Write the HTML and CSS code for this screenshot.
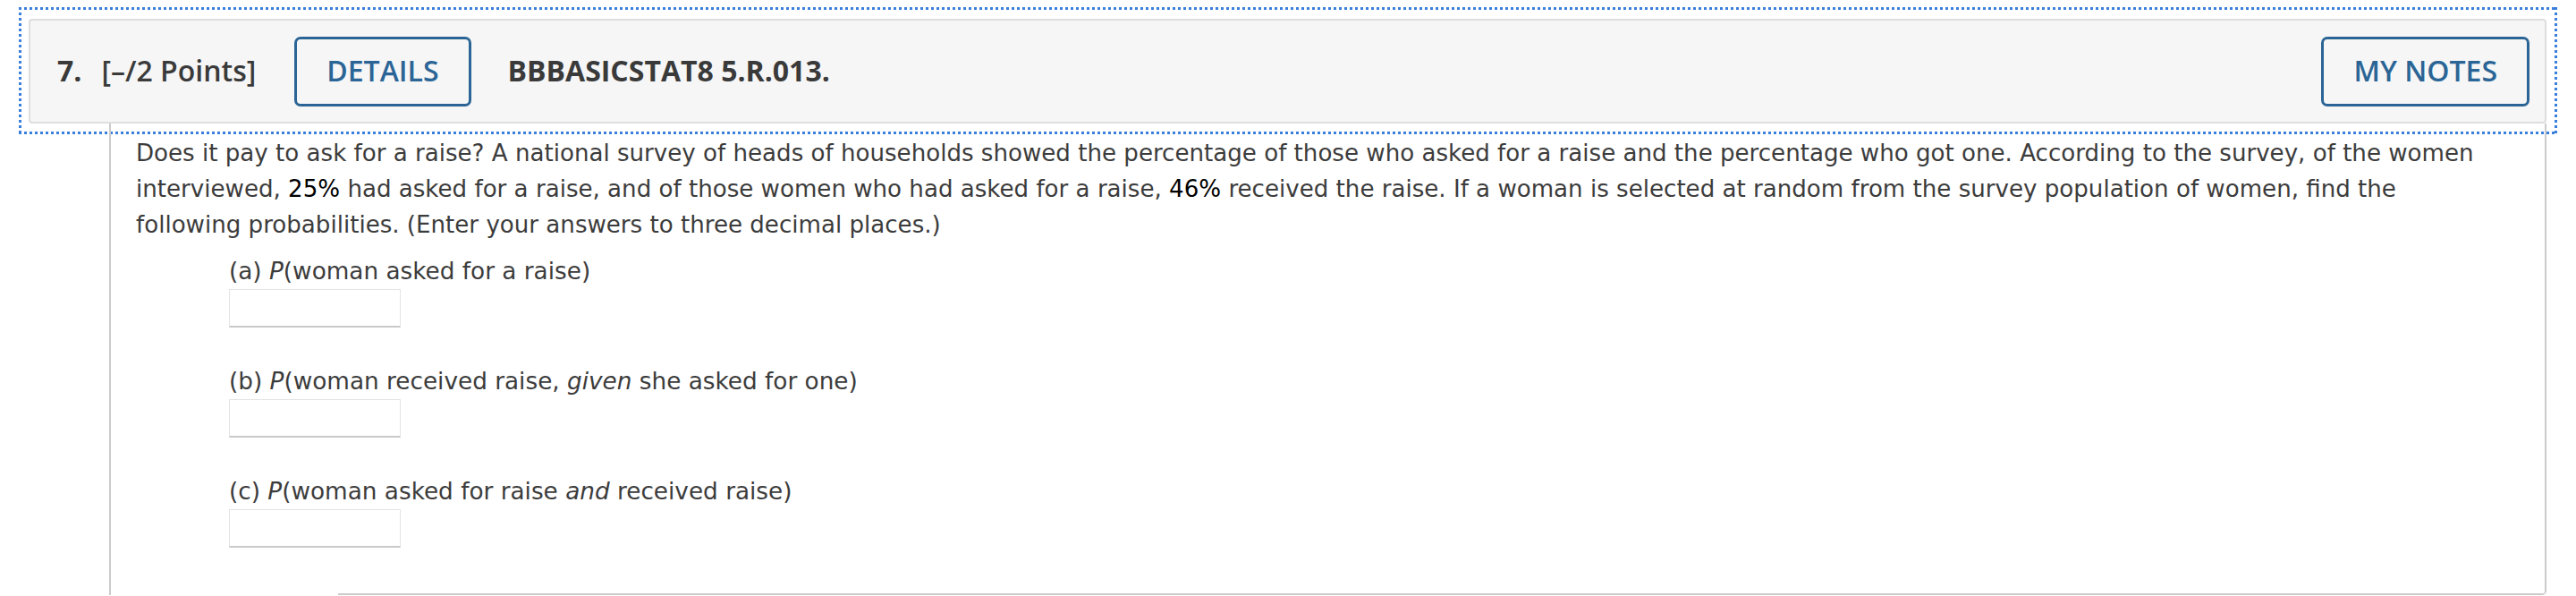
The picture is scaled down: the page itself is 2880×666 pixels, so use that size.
FILE: index.html
```html
<!DOCTYPE html>
<html lang="en">
<head>
<meta charset="utf-8">
<title>Question 7</title>
<link rel="stylesheet" href="styles.css">
</head>
<body>
<div class="page">
  <div class="question">
    <div class="focus-ring">
      <div class="q-header">
        <span class="q-num">7.</span>
        <span class="q-points">[–/2 Points]</span>
        <button class="btn">DETAILS</button>
        <span class="q-code">BBBASICSTAT8 5.R.013.</span>
        <button class="btn btn-notes">MY NOTES</button>
      </div>
    </div>
    <div class="q-body">
      <p class="q-text">Does it pay to ask for a raise? A national survey of heads of households showed the percentage of those who asked for a raise and the percentage who got one. According to the survey, of the women interviewed, <span class="num">25%</span> had asked for a raise, and of those women who had asked for a raise, <span class="num">46%</span> received the raise. If a woman is selected at random from the survey population of women, find the following probabilities. (Enter your answers to three decimal places.)</p>
      <div class="parts">
        <div class="part">
          <div class="part-label">(a) <i>P</i>(woman asked for a raise)</div>
          <input class="answer" type="text">
        </div>
        <div class="part">
          <div class="part-label">(b) <i>P</i>(woman received raise, <i>given</i> she asked for one)</div>
          <input class="answer" type="text">
        </div>
        <div class="part">
          <div class="part-label">(c) <i>P</i>(woman asked for raise <i>and</i> received raise)</div>
          <input class="answer" type="text">
        </div>
      </div>
    </div>
  </div>
</div>
</body>
</html>
```

FILE: styles.css
```css
html, body {
  margin: 0;
  padding: 0;
  background: #ffffff;
}

.page {
  padding: 8px 21px 0 21px;
}

.question {
  display: flex;
  flex-direction: column;
}

.focus-ring {
  position: relative;
  z-index: 0;
  padding: 13px 12px 12px 11px;
  background:
    repeating-linear-gradient(to right, #3a7fdc 0 3px, transparent 3px 6px) left top / 100% 3px no-repeat,
    repeating-linear-gradient(to right, #3a7fdc 0 3px, transparent 3px 6px) left bottom / 100% 3px no-repeat,
    repeating-linear-gradient(to bottom, #3a7fdc 0 3px, transparent 3px 6px) left top / 3px 100% no-repeat,
    repeating-linear-gradient(to bottom, #3a7fdc 0 3px, transparent 3px 6px) right top / 3px 100% no-repeat;
}

.q-header {
  display: flex;
  align-items: center;
  height: 113px;
  padding: 0 17px 0 30px;
  background: #f6f6f6;
  border: 2px solid #dedede;
  border-radius: 4px;
  font-family: "Open Sans", "Liberation Sans", sans-serif;
  font-size: 32px;
  line-height: 1.2;
  color: #3a3a3a;
}

.q-num {
  font-weight: 700;
  margin-right: 22px;
}

.q-points {
  font-weight: 600;
  margin-right: 43px;
}

.q-code {
  font-weight: 700;
  margin-left: 41px;
  flex: 1;
}

.btn {
  display: flex;
  align-items: center;
  justify-content: center;
  height: 78px;
  padding: 0 33px;
  background: transparent;
  border: 3px solid #2b6596;
  border-radius: 7px;
  font-family: "Open Sans", "Liberation Sans", sans-serif;
  font-size: 32px;
  line-height: 1.2;
  font-weight: 600;
  color: #2b6596;
}

.q-body {
  position: relative;
  z-index: 1;
  margin: -12px 12px 0 101px;
  padding: 13px 44px 13px 28px;
  border-left: 2px solid #cbcbcb;
  border-right: 2px solid #cbcbcb;
  border-bottom-right-radius: 5px;
  background: linear-gradient(#cbcbcb, #cbcbcb) right bottom / calc(100% - 254px) 2px no-repeat;
  font-family: "DejaVu Sans", Verdana, sans-serif;
  font-size: 26.1px;
  line-height: 40px;
  color: #3c3c3c;
}

.q-text {
  margin: 0 0 12px 0;
}

.num {
  color: #000000;
}

.parts {
  display: flex;
  flex-direction: column;
  gap: 40px;
  padding-left: 104px;
  padding-bottom: 40px;
  font-size: 26.3px;
}

.part {
  display: flex;
  flex-direction: column;
  align-items: flex-start;
}

.answer {
  box-sizing: border-box;
  width: 192px;
  height: 43px;
  margin: 0;
  padding: 0 8px;
  background: #ffffff;
  border: 1px solid #e4e4e4;
  border-bottom: 2px solid #c9c9c9;
  border-radius: 1px;
  font-family: "DejaVu Sans", sans-serif;
  font-size: 24px;
}
```
